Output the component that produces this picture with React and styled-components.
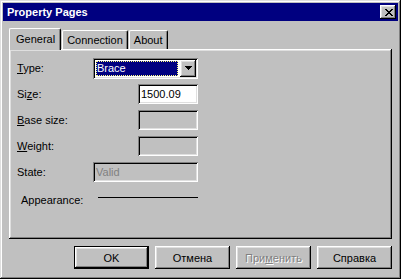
import React from "react"
import styled, { createGlobalStyle } from "styled-components"

const GlobalStyle = createGlobalStyle`
  body {
    margin: 0;
    font-family: "Liberation Sans", Arial, sans-serif;
    font-size: 11px;
    color: #000;
  }
`

const raised = `
  box-shadow: inset -1px -1px #000, inset 1px 1px #fff,
    inset -2px -2px #808080, inset 2px 2px #dfdfdf;
`
const sunken = `
  box-shadow: inset 1px 1px #808080, inset -1px -1px #fff,
    inset 2px 2px #000, inset -2px -2px #dfdfdf;
`

const fields = [
  { key: "T", label: ["", "T", "ype:"], kind: "combo", value: "Brace" },
  { key: "S", label: ["Si", "z", "e:"], kind: "edit", value: "1500.09" },
  { key: "B", label: ["", "B", "ase size:"], kind: "edit", disabled: true },
  { key: "W", label: ["", "W", "eight:"], kind: "edit", disabled: true },
  { key: "St", label: ["State:", "", ""], kind: "wide", value: "Valid", disabled: true },
]

const CloseGlyph = () => (
  <svg width="8" height="7" viewBox="0 0 8 7" shapeRendering="crispEdges">
    <path
      d="M0 0h2v1H0zM6 0h2v1H6zM1 1h2v1H1zM5 1h2v1H5zM2 2h4v1H2zM3 3h2v1H3zM2 4h4v1H2zM1 5h2v1H1zM5 5h2v1H5zM0 6h2v1H0zM6 6h2v1H6z"
      fill="#000"
    />
  </svg>
)

const DownArrow = () => (
  <svg width="7" height="4" viewBox="0 0 7 4" shapeRendering="crispEdges">
    <path d="M0 0h7v1H0zM1 1h5v1H1zM2 2h3v1H2zM3 3h1v1H3z" fill="#000" />
  </svg>
)

export default function App() {
  return (
    <>
      <GlobalStyle />
      <Window>
        <TitleBar>
          <Caption>Property Pages</Caption>
          <CloseButton>
            <CloseGlyph />
          </CloseButton>
        </TitleBar>
        <TabStrip>
          <Tab active>General</Tab>
          <Tab>Connection</Tab>
          <Tab>About</Tab>
        </TabStrip>
        <Panel>
          {fields.map(f => (
            <Row key={f.key}>
              <Label>
                {f.label[0]}
                <u>{f.label[1]}</u>
                {f.label[2]}
              </Label>
              {f.kind === "combo" && (
                <Combo>
                  <Selection>{f.value}</Selection>
                  <DropButton>
                    <DownArrow />
                  </DropButton>
                </Combo>
              )}
              {f.kind === "edit" && (
                <Edit disabled={f.disabled}>{f.value}</Edit>
              )}
              {f.kind === "wide" && (
                <Edit wide disabled={f.disabled}>
                  {f.value}
                </Edit>
              )}
            </Row>
          ))}
          <AppearanceRow>
            <Label indent>Appearance:</Label>
            <Stroke />
          </AppearanceRow>
        </Panel>
        <ButtonBar>
          <Button isDefault>OK</Button>
          <Button>Отмена</Button>
          <Button disabled>
            При<u>м</u>енить
          </Button>
          <Button>Справка</Button>
        </ButtonBar>
      </Window>
    </>
  )
}

const Window = styled.div`
  width: 401px;
  height: 279px;
  box-sizing: border-box;
  padding: 3px;
  background: #c0c0c0;
  box-shadow: inset -1px -1px #000, inset 1px 1px #dfdfdf,
    inset -2px -2px #808080, inset 2px 2px #fff;
  display: flex;
  flex-direction: column;
`

const TitleBar = styled.div`
  height: 18px;
  background: #000080;
  display: flex;
  align-items: center;
  justify-content: space-between;
  padding: 0 2px 0 4px;
`

const Caption = styled.span`
  color: #fff;
  font-weight: bold;
  font-size: 11px;
`

const CloseButton = styled.div`
  width: 16px;
  height: 14px;
  background: #c0c0c0;
  ${raised}
  display: flex;
  align-items: center;
  justify-content: center;
  padding-left: 1px;
  box-sizing: border-box;
`

const TabStrip = styled.div`
  display: flex;
  align-items: flex-end;
  height: 21px;
  margin-top: 7px;
  padding-left: 6px;
  position: relative;
  z-index: 1;
`

const Tab = styled.div`
  box-sizing: border-box;
  height: ${p => (p.active ? "22px" : "19px")};
  margin-bottom: ${p => (p.active ? "-1px" : "0")};
  padding: ${p => (p.active ? "3px 5px 0 6px" : "2px 4px 0 4px")};
  margin-right: 1px;
  background: #c0c0c0;
  border-radius: 2px 2px 0 0;
  border-top: 1px solid #fff;
  border-left: 1px solid #fff;
  border-right: 1px solid #000;
  box-shadow: inset -1px 0 #808080;
  line-height: 14px;
`

const Panel = styled.div`
  height: 190px;
  box-sizing: border-box;
  margin: 0 6px;
  padding: 9px 8px 0;
  background: #c0c0c0;
  box-shadow: inset -1px -1px #000, inset 1px 1px #fff,
    inset -2px -2px #808080, inset 2px 2px #dfdfdf;
  display: flex;
  flex-direction: column;
  gap: 6px;
`

const Row = styled.div`
  display: flex;
  align-items: center;
  height: 20px;
`

const Label = styled.div`
  width: 76px;
  padding-left: ${p => (p.indent ? "4px" : "0")};
  box-sizing: border-box;
  white-space: nowrap;
`

const Combo = styled.div`
  width: 105px;
  height: 21px;
  box-sizing: border-box;
  padding: 2px;
  background: #fff;
  ${sunken}
  display: flex;
  align-items: stretch;
`

const Selection = styled.div`
  flex: 1;
  margin: 1px 2px 1px 1px;
  padding-left: 1px;
  background: #000080;
  color: #fff;
  outline: 1px dotted #ffff80;
  outline-offset: -1px;
  display: flex;
  align-items: center;
`

const DropButton = styled.div`
  width: 16px;
  background: #c0c0c0;
  ${raised}
  display: flex;
  align-items: center;
  justify-content: center;
`

const Edit = styled.div`
  width: ${p => (p.wide ? "105px" : "60px")};
  margin-left: ${p => (p.wide ? "0" : "45px")};
  height: 20px;
  box-sizing: border-box;
  padding: 3px 3px 0;
  background: ${p => (p.disabled ? "#c0c0c0" : "#fff")};
  color: ${p => (p.disabled ? "#808080" : "#000")};
  ${sunken}
  line-height: 14px;
`

const AppearanceRow = styled.div`
  display: flex;
  align-items: center;
  height: 20px;
  margin-top: 2px;
`

const Stroke = styled.div`
  width: 100px;
  height: 1px;
  background: #000;
  margin: -6px 0 0 5px;
`

const ButtonBar = styled.div`
  display: flex;
  justify-content: flex-end;
  gap: 6px;
  margin-top: 7px;
  padding-right: 6px;
`

const Button = styled.div`
  width: 75px;
  height: 23px;
  box-sizing: border-box;
  display: flex;
  align-items: center;
  justify-content: center;
  background: #c0c0c0;
  border: ${p => (p.isDefault ? "1px solid #000" : "none")};
  ${raised}
  color: ${p => (p.disabled ? "#808080" : "#000")};
  text-shadow: ${p => (p.disabled ? "1px 1px #fff" : "none")};
`
